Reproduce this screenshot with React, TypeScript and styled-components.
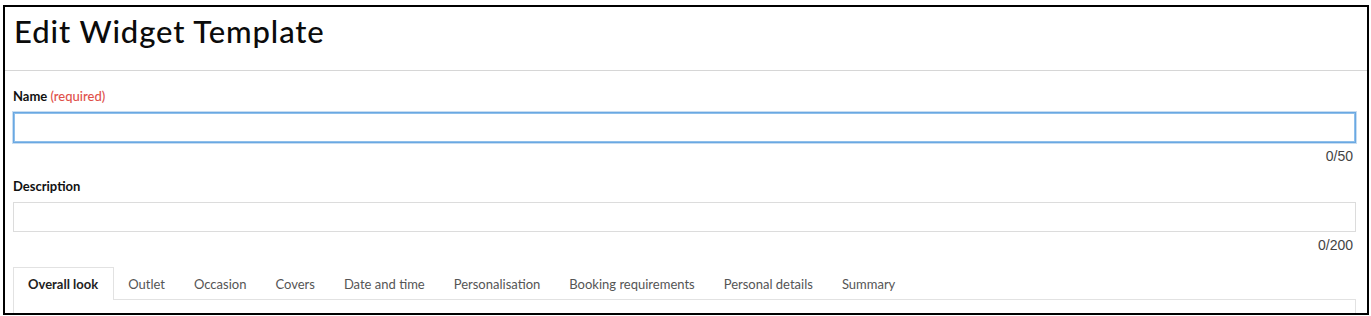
import React from "react";
import styled, { createGlobalStyle } from "styled-components";

const Global = createGlobalStyle`
  html, body { margin: 0; padding: 0; background: #fff; }
  body { font-family: Lato, "Noto Sans", sans-serif; color: #111; }
  * { box-sizing: border-box; }
`;

const Frame = styled.div`
  margin: 5px 0 0 3px;
  width: 1366px;
  height: 310px;
  border: 2px solid #000;
  overflow: hidden;
  background: #fff;
  display: flex;
  flex-direction: column;
`;

const Header = styled.header`
  height: 64px;
  flex: none;
  border-bottom: 1px solid #d6d6d6;
  padding: 5px 0 0 9px;
`;

const Title = styled.h1`
  margin: 0;
  font-size: 31px;
  font-weight: 500;
  line-height: 38px;
  color: #0b0b0b;
  letter-spacing: 0.9px;
`;

const Body = styled.div`
  padding: 16px 11px 0 8px;
  display: flex;
  flex-direction: column;
`;

const Label = styled.label`
  display: block;
  font-size: 13px;
  font-weight: 700;
  line-height: 18px;
  color: #111;
  margin-bottom: 7px;
`;

const Required = styled.span`
  color: #e0504a;
  font-weight: 500;
`;

const Input = styled.input<{ $focused?: boolean }>`
  display: block;
  width: 100%;
  height: ${(p) => (p.$focused ? "31px" : "30px")};
  border: 1px solid ${(p) => (p.$focused ? "#6aa8e2" : "#dcdcdc")};
  box-shadow: ${(p) => (p.$focused ? "0 0 0 1px #c8ddf1, inset 0 0 0 1px #8fbfea" : "none")};
  outline: none;
  background: #fff;
  padding: 0 8px;
  font: inherit;
`;

const Counter = styled.div<{ $after?: number }>`
  text-align: right;
  font-family: "Liberation Sans", Arial, sans-serif;
  font-size: 14px;
  line-height: 16px;
  color: #444;
  padding-right: 3px;
  margin-top: 5px;
  margin-bottom: ${(p) => p.$after ?? 0}px;
`;

const Tabs = styled.div`
  display: flex;
  border-bottom: 1px solid #e2e2e2;
  height: 33px;
  flex: none;
`;

const Tab = styled.div<{ $active?: boolean }>`
  display: flex;
  align-items: center;
  font-size: 13px;
  line-height: 32px;
  color: ${(p) => (p.$active ? "#222" : "#555")};
  font-weight: ${(p) => (p.$active ? 700 : 400)};
  background: #fff;
  border: 1px solid ${(p) => (p.$active ? "#e2e2e2" : "transparent")};
  border-bottom: none;
  margin-bottom: ${(p) => (p.$active ? "-1px" : "0")};
  height: ${(p) => (p.$active ? "33px" : "32px")};
  padding-left: ${(p) => (p.$active ? "14px" : "13.5px")};
  padding-right: ${(p) => (p.$active ? "14.5px" : "13.5px")};
`;

const Panel = styled.div`
  border: 1px solid #e2e2e2;
  border-top: none;
  height: 40px;
`;

const tabs = [
  "Overall look",
  "Outlet",
  "Occasion",
  "Covers",
  "Date and time",
  "Personalisation",
  "Booking requirements",
  "Personal details",
  "Summary",
];

export default function App() {
  return (
    <>
      <Global />
      <Frame>
        <Header>
          <Title>Edit Widget Template</Title>
        </Header>
        <Body>
          <Label>
            Name <Required>(required)</Required>
          </Label>
          <Input $focused />
          <Counter $after={13}>0/50</Counter>
          <Label>Description</Label>
          <Input />
          <Counter $after={14}>0/200</Counter>
          <Tabs>
            {tabs.map((t, i) => (
              <Tab key={t} $active={i === 0}>
                {t}
              </Tab>
            ))}
          </Tabs>
          <Panel />
        </Body>
      </Frame>
    </>
  );
}
